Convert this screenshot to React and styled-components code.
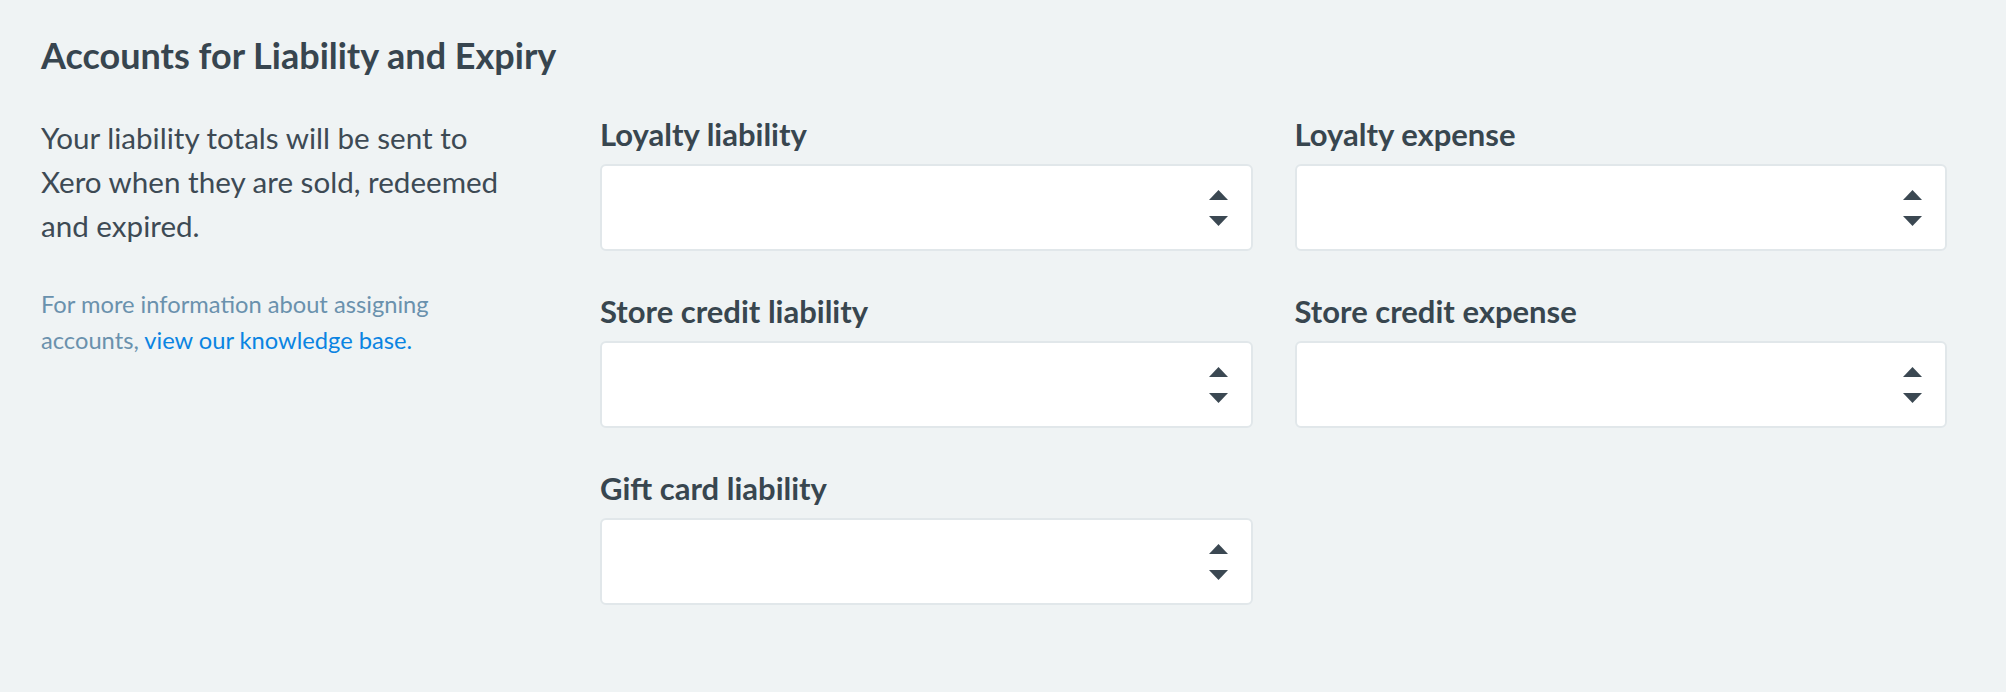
import styled, { createGlobalStyle } from "styled-components"

const GlobalStyle = createGlobalStyle`
    html, body {
        margin: 0;
        padding: 0;
        background: #eff3f4;
    }
    body {
        font-family: Lato, "Open Sans", sans-serif;
        color: #3b4852;
    }
    * {
        box-sizing: border-box;
    }
`

const Page = styled.section`
    min-height: 100vh;
    padding: 35px 59px 40px 41px;
`

const Title = styled.h2`
    margin: 0 0 41px;
    font-size: 36px;
    line-height: 40px;
    font-weight: 700;
    color: #37454f;
`

const Layout = styled.div`
    display: grid;
    grid-template-columns: 480px 1fr;
    column-gap: 79px;
`

const Intro = styled.div`
    display: flex;
    flex-direction: column;
    gap: 38px;
`

const Lead = styled.p`
    margin: 0;
    font-size: 29.6px;
    line-height: 44px;
    color: #3d4a54;
`

const Help = styled.p`
    margin: 0;
    font-size: 23.7px;
    line-height: 36px;
    color: #6a91ad;
`

const HelpLink = styled.a`
    color: #0a84e2;
    text-decoration: none;
`

const Fields = styled.div`
    display: grid;
    grid-template-columns: 1fr 1fr;
    column-gap: 42px;
    row-gap: 42px;
`

const Field = styled.label`
    display: flex;
    flex-direction: column;
    gap: 12px;
`

const Label = styled.span`
    font-size: 31px;
    line-height: 36px;
    font-weight: 700;
    color: #38464f;
`

const Select = styled.button`
    display: flex;
    align-items: center;
    justify-content: flex-end;
    height: 87px;
    padding: 0 23px 0 0;
    background: #fff;
    border: 2px solid #e1e7ea;
    border-radius: 6px;
    cursor: pointer;
`

const Stepper = () => (
    <svg width="19" height="36" viewBox="0 0 19 36" aria-hidden="true">
        <polygon points="9.5,0 19,10 0,10" fill="#3b4852" />
        <polygon points="0,26 19,26 9.5,36" fill="#3b4852" />
    </svg>
)

const fields = [
    "Loyalty liability",
    "Loyalty expense",
    "Store credit liability",
    "Store credit expense",
    "Gift card liability",
]

const App = () => {
    return (
        <>
            <GlobalStyle />
            <Page>
                <Title>Accounts for Liability and Expiry</Title>
                <Layout>
                    <Intro>
                        <Lead>Your liability totals will be sent to Xero when they are sold, redeemed and expired.</Lead>
                        <Help>
                            For more information about assigning accounts, <HelpLink href="#">view our knowledge base.</HelpLink>
                        </Help>
                    </Intro>
                    <Fields>
                        {fields.map((name) => (
                            <Field key={name}>
                                <Label>{name}</Label>
                                <Select type="button" aria-label={name}>
                                    <Stepper />
                                </Select>
                            </Field>
                        ))}
                    </Fields>
                </Layout>
            </Page>
        </>
    )
}

export default App
